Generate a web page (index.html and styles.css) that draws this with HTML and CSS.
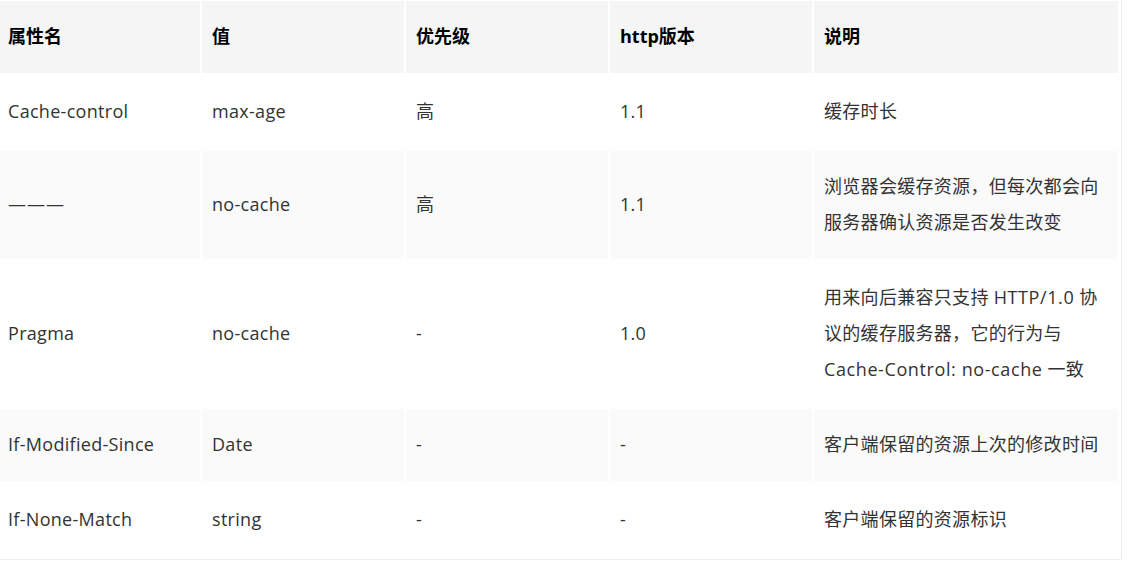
FILE: index.html
```html
<!DOCTYPE html>
<html lang="zh-CN">
<head>
<meta charset="utf-8">
<title>HTTP 缓存头</title>
<link rel="stylesheet" href="styles.css">
</head>
<body>
<div class="wrap">
  <table class="grid">
    <colgroup>
      <col class="c-std"><col class="c-std"><col class="c-std"><col class="c-std"><col class="c-wide">
    </colgroup>
    <thead>
      <tr>
        <th>属性名</th>
        <th>值</th>
        <th>优先级</th>
        <th>http版本</th>
        <th>说明</th>
      </tr>
    </thead>
    <tbody>
      <tr class="tall">
        <td>Cache-control</td>
        <td>max-age</td>
        <td>高</td>
        <td>1.1</td>
        <td>缓存时长</td>
      </tr>
      <tr class="alt">
        <td class="dash">———</td>
        <td>no-cache</td>
        <td>高</td>
        <td>1.1</td>
        <td>浏览器会缓存资源，但每次都会向服务器确认资源是否发生改变</td>
      </tr>
      <tr class="tall3">
        <td>Pragma</td>
        <td>no-cache</td>
        <td>-</td>
        <td>1.0</td>
        <td>用来向后兼容只支持 <span class="lat">HTTP/1.0</span> 协议的缓存服务器，它的行为与 <span class="lat">Cache-Control: no-cache</span> 一致</td>
      </tr>
      <tr class="alt">
        <td>If-Modified-Since</td>
        <td>Date</td>
        <td>-</td>
        <td>-</td>
        <td>客户端保留的资源上次的修改时间</td>
      </tr>
      <tr class="tall">
        <td>If-None-Match</td>
        <td>string</td>
        <td>-</td>
        <td>-</td>
        <td>客户端保留的资源标识</td>
      </tr>
    </tbody>
  </table>
</div>
</body>
</html>
```
FILE: styles.css
```css
html, body {
  margin: 0;
  padding: 0;
  background: #ffffff;
}

body {
  font-family: "Open Sans", "Noto Sans CJK SC", sans-serif;
  font-size: 18px;
  color: #333333;
}

.wrap {
  box-sizing: border-box;
  width: 1126px;
  margin-left: -4px;
  margin-top: -1px;
  padding-right: 1px;
  border-right: 1px solid #ededed;
  border-bottom: 1px solid #ededed;
}

.grid {
  width: 1124px;
  table-layout: fixed;
  border-collapse: separate;
  border-spacing: 2px;
}

.c-std {
  width: 202px;
}

.c-wide {
  width: 304px;
}

.grid th,
.grid td {
  padding: 17px 10px 19px;
  line-height: 36px;
  text-align: left;
  vertical-align: middle;
  letter-spacing: 0.3px;
}

.grid th {
  background: #f5f5f5;
  color: #000000;
  font-weight: 700;
  letter-spacing: 0;
}

.grid td {
  background: #ffffff;
}

.grid tr.alt td {
  background: #fafafa;
}

.grid tr.tall td {
  height: 38px;
}

.grid tr.tall3 td {
  height: 110px;
}

.grid td.dash {
  letter-spacing: 1px;
}

.lat {
  letter-spacing: 0.6px;
  white-space: nowrap;
}
```
